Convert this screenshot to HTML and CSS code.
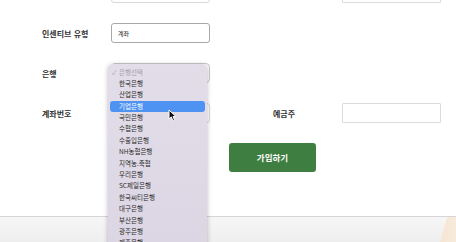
FILE: index.html
```html
<!DOCTYPE html>
<html lang="ko">
<head>
    <meta charset="UTF-8">
    <meta name="viewport" content="width=device-width, initial-scale=1.0">
    <title>가입하기</title>
    <link rel="stylesheet" href="styles.css">
</head>
<body>

<section class="join">
    <div class="form">
        <div class="label"></div>
        <div class="field"><input type="text" class="input"></div>
        <div class="label right"></div>
        <div class="field"><input type="text" class="input square"></div>

        <div class="label">인센티브 유형</div>
        <div class="field"><input type="text" class="input dark" value="계좌"></div>
        <div></div>
        <div></div>

        <div class="label">은행</div>
        <div class="field"><div class="select"></div></div>
        <div></div>
        <div></div>

        <div class="label">계좌번호</div>
        <div class="field"><input type="text" class="input"></div>
        <div class="label right">예금주</div>
        <div class="field"><input type="text" class="input square"></div>
    </div>

    <div class="actions">
        <button class="submit">가입하기</button>
    </div>

    <!-- open bank dropdown -->
    <ul class="dropdown">
        <li class="disabled"><span class="check">✓</span>은행선택</li>
        <li>한국은행</li>
        <li>산업은행</li>
        <li class="hover">기업은행</li>
        <li>국민은행</li>
        <li>수협은행</li>
        <li>수출입은행</li>
        <li>NH농협은행</li>
        <li>지역농.축협</li>
        <li>우리은행</li>
        <li>SC제일은행</li>
        <li>한국씨티은행</li>
        <li>대구은행</li>
        <li>부산은행</li>
        <li>광주은행</li>
        <li>제주은행</li>
    </ul>

    <svg class="cursor" width="9" height="13" viewBox="0 0 9 13">
        <path d="M1 1 L1 10 L3.3 8 L5 12 L6.6 11.3 L5 7.6 L8 7.6 Z" fill="#111" stroke="#fff" stroke-width="1"/>
    </svg>
</section>

<footer class="footer">
    <div class="corner"></div>
</footer>

</body>
</html>
```

FILE: styles.css
```css
body {
    font-family: "Noto Sans CJK KR", "Noto Sans", sans-serif;
    margin: 0;
    padding: 0;
    background-color: white;
    overflow: hidden;
    width: 456px;
    height: 242px;
}

.join {
    position: relative;
    display: flow-root;
    height: 216px;
    z-index: 2;
}

.form {
    display: grid;
    grid-template-columns: 69px 99px 132px 99px;
    grid-auto-rows: 20px;
    row-gap: 20px;
    padding-left: 42px;
    margin-top: -17px;
}

.label {
    display: flex;
    align-items: center;
    font-size: 8px;
    font-weight: 700;
    color: #333;
}

.label.right {
    padding-left: 63px;
}

.field {
    display: flex;
}

.input {
    box-sizing: border-box;
    width: 99px;
    height: 20px;
    border: 1px solid #d8d8d8;
    border-radius: 3px;
    padding: 0 6px;
    font-family: inherit;
    font-size: 6px;
    color: #222;
    background: white;
}

.input.dark {
    border-color: #a8a8a8;
}

.input.square {
    border-radius: 1px;
    border-color: #dcdcdc;
}

.select {
    box-sizing: border-box;
    width: 99px;
    height: 20px;
    border: 1px solid #c9c9c9;
    border-radius: 4px;
    background: #fafafa;
}

.actions {
    padding-left: 229px;
    margin-top: 19px;
}

.submit {
    width: 87px;
    height: 29px;
    border: none;
    border-radius: 3px;
    background-color: #3f7e41;
    color: white;
    font-family: inherit;
    font-size: 8.5px;
    font-weight: 700;
    cursor: pointer;
}

.dropdown {
    position: absolute;
    left: 108px;
    top: 64px;
    width: 99px;
    height: 190px;
    margin: 0;
    padding: 2.5px 2px 0;
    box-sizing: border-box;
    list-style: none;
    background: linear-gradient(#e2dde9, #dcd6e4);
    border-radius: 5px;
    box-shadow: 0 1px 5px rgba(0, 0, 0, 0.28);
    overflow: hidden;
}

.dropdown li {
    height: 11.4px;
    line-height: 11.4px;
    padding-left: 9px;
    font-size: 6.5px;
    color: #2a2a2a;
    border-radius: 3px;
    position: relative;
}

.dropdown li.disabled {
    color: #a39fab;
}

.dropdown .check {
    position: absolute;
    left: 2px;
}

.dropdown li.hover {
    background-color: #4f93f2;
    color: white;
}

.cursor {
    position: absolute;
    left: 168px;
    top: 109px;
}

.footer {
    position: relative;
    height: 26px;
    border-top: 1px solid #d6d6d6;
    background: linear-gradient(#f6f6f6, #eeeeee);
    overflow: hidden;
}

.corner {
    position: absolute;
    right: 0;
    top: -14px;
    width: 16px;
    height: 40px;
    background: linear-gradient(90deg, #f5e4d2, #f8ebdd);
    clip-path: polygon(11px 0, 16px 0, 16px 100%, 0 100%);
}
```
